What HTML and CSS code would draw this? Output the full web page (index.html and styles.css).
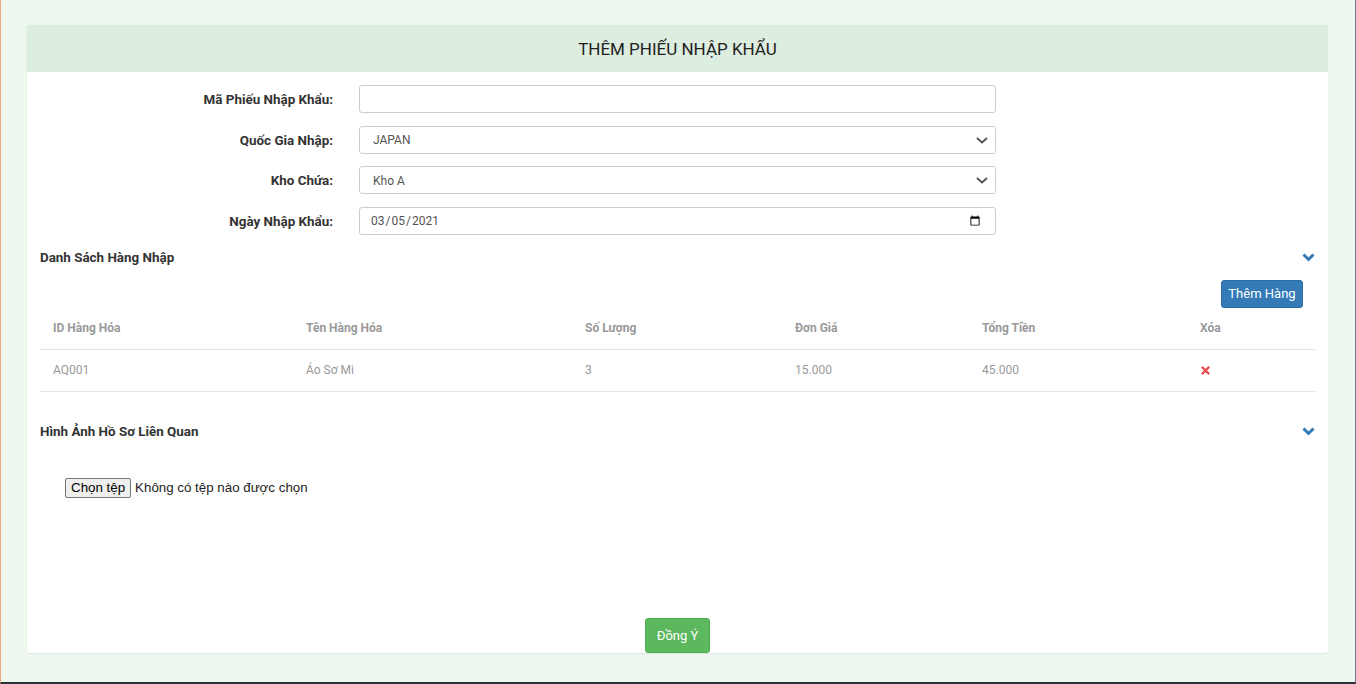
FILE: index.html
```html
<!DOCTYPE html>
<html lang="vi">
<head>
<meta charset="utf-8">
<title>Thêm phiếu nhập khẩu</title>
<link rel="stylesheet" href="styles.css">
</head>
<body>
<div class="frame">
  <div class="card">
    <div class="card-head">THÊM PHIẾU NHẬP KHẨU</div>
    <form class="form">
      <label class="lbl" for="ma">Mã Phiếu Nhập Khẩu:</label>
      <input class="ctl" id="ma" type="text">
      <label class="lbl" for="qg">Quốc Gia Nhập:</label>
      <div class="sel">
        <select class="ctl" id="qg"><option>JAPAN</option></select>
        <svg class="sel-arrow" width="12" height="7" viewBox="0 0 12 7"><polyline points="1,1 6,5.5 11,1" fill="none" stroke="#555" stroke-width="2"/></svg>
      </div>
      <label class="lbl" for="kho">Kho Chứa:</label>
      <div class="sel">
        <select class="ctl" id="kho"><option>Kho A</option></select>
        <svg class="sel-arrow" width="12" height="7" viewBox="0 0 12 7"><polyline points="1,1 6,5.5 11,1" fill="none" stroke="#555" stroke-width="2"/></svg>
      </div>
      <label class="lbl" for="ngay">Ngày Nhập Khẩu:</label>
      <input class="ctl" id="ngay" type="date" value="2021-03-05">
    </form>

    <div class="section">
      <div class="sec-head">
        <span>Danh Sách Hàng Nhập</span>
        <svg class="chev" width="13" height="9" viewBox="0 0 13 9"><polyline points="1.5,1.5 6.5,6.5 11.5,1.5" fill="none" stroke="#337ab7" stroke-width="3"/></svg>
      </div>
      <div class="toolbar"><button type="button" class="btn btn-blue">Thêm Hàng</button></div>
      <table class="tbl">
        <colgroup>
          <col class="c1"><col class="c2"><col class="c3"><col class="c4"><col class="c5"><col>
        </colgroup>
        <thead>
          <tr><th>ID Hàng Hóa</th><th>Tên Hàng Hóa</th><th>Số Lượng</th><th>Đơn Giá</th><th>Tổng Tiền</th><th>Xóa</th></tr>
        </thead>
        <tbody>
          <tr><td>AQ001</td><td>Áo Sơ Mi</td><td>3</td><td>15.000</td><td>45.000</td>
            <td><svg class="del" width="9" height="9" viewBox="0 0 9 9"><path d="M1.5 1.5 L7.5 7.5 M7.5 1.5 L1.5 7.5" stroke="#e8474c" stroke-width="2.4" stroke-linecap="round"/></svg></td></tr>
        </tbody>
      </table>
    </div>

    <div class="section">
      <div class="sec-head sec-head2">
        <span>Hình Ảnh Hồ Sơ Liên Quan</span>
        <svg class="chev" width="13" height="9" viewBox="0 0 13 9"><polyline points="1.5,1.5 6.5,6.5 11.5,1.5" fill="none" stroke="#337ab7" stroke-width="3"/></svg>
      </div>
      <div class="file">
        <button type="button" class="file-btn">Chọn tệp</button>
        <span class="file-txt">Không có tệp nào được chọn</span>
      </div>
    </div>

    <div class="footer"><button type="button" class="btn btn-green">Đồng Ý</button></div>
  </div>
</div>
</body>
</html>
```

FILE: styles.css
```css
html, body {
  margin: 0;
  padding: 0;
}
body {
  background: #eef7ee;
  font-family: Roboto, "Liberation Sans", Arial, sans-serif;
  color: #333;
}
.frame {
  height: 684px;
  box-sizing: border-box;
  border-left: 1px solid #f2a48c;
  border-right: 1px solid #7b6f9c;
  border-bottom: 2px solid #2b2f36;
  padding: 25px 27px 0 26px;
}
.card {
  background: #fff;
  height: 628px;
  display: flex;
  flex-direction: column;
  border-radius: 0 0 3px 3px;
  box-shadow: 0 1px 1px #dfe6df;
}
.card-head {
  background: #ddede0;
  height: 47px;
  display: flex;
  align-items: center;
  justify-content: center;
  font-size: 17px;
  color: #222;
  flex: none;
}
.form {
  display: grid;
  grid-template-columns: 306px 637px;
  column-gap: 26px;
  row-gap: 12.5px;
  margin-top: 13px;
  align-items: center;
}
.lbl {
  text-align: right;
  font-size: 13.4px;
  font-weight: bold;
  color: #333;
  padding-top: 1px;
}
.ctl {
  height: 28px;
  width: 100%;
  box-sizing: border-box;
  border: 1px solid #ccc;
  border-radius: 3px;
  padding: 1px 12px 0;
  font-family: Roboto, "Liberation Sans", Arial, sans-serif;
  font-size: 12px;
  color: #555;
  background: #fff;
  margin: 0;
  display: block;
}
.sel {
  position: relative;
}
select.ctl {
  -webkit-appearance: none;
  appearance: none;
  padding-left: 13px;
}
.sel-arrow {
  position: absolute;
  right: 8px;
  top: 11px;
  pointer-events: none;
}
input[type="date"].ctl {
  padding-left: 10px;
}
.section {
  padding: 0 13px;
}
.sec-head {
  display: flex;
  justify-content: space-between;
  align-items: center;
  height: 20px;
  margin-top: 13px;
  font-size: 13.4px;
  font-weight: bold;
  color: #333;
}
.sec-head2 {
  margin-top: 30px;
}
.chev {
  display: block;
}
.toolbar {
  display: flex;
  justify-content: flex-end;
  padding-right: 12px;
  margin-top: 12px;
}
.btn {
  border: 1px solid transparent;
  border-radius: 3px;
  font-family: Roboto, "Liberation Sans", Arial, sans-serif;
  font-size: 13px;
  color: #fff;
  cursor: pointer;
}
.btn-blue {
  background: #337ab7;
  border-color: #2e6da4;
  height: 28px;
  width: 82px;
  padding: 0;
}
.btn-green {
  background: #5cb85c;
  border-color: #4cae4c;
  height: 35px;
  width: 65px;
  padding: 0;
}
.tbl {
  width: 100%;
  border-collapse: collapse;
  table-layout: fixed;
  font-size: 12px;
  color: #999;
}
.c1 { width: 253px; }
.c2 { width: 279px; }
.c3 { width: 210px; }
.c4 { width: 187px; }
.c5 { width: 218px; }
.tbl th {
  text-align: left;
  font-weight: bold;
  height: 41px;
  padding: 0 13px;
  border-bottom: 1px solid #e4e4e4;
  vertical-align: middle;
}
.tbl td {
  height: 41px;
  padding: 0 13px;
  border-bottom: 1px solid #e4e4e4;
  vertical-align: middle;
}
.del {
  display: block;
  margin-left: 1px;
}
.file {
  display: flex;
  align-items: center;
  margin-top: 36px;
  padding-left: 25px;
  font-family: "Liberation Sans", Arial, sans-serif;
  font-size: 13.33px;
  color: #222;
}
.file-btn {
  font-family: "Liberation Sans", Arial, sans-serif;
  font-size: 13.33px;
  color: #000;
  background: #efefef;
  border: 1px solid #767676;
  border-radius: 2px;
  height: 20px;
  padding: 0 5px;
  margin: 0 4px 0 0;
}
.footer {
  margin-top: auto;
  display: flex;
  justify-content: center;
}
```
